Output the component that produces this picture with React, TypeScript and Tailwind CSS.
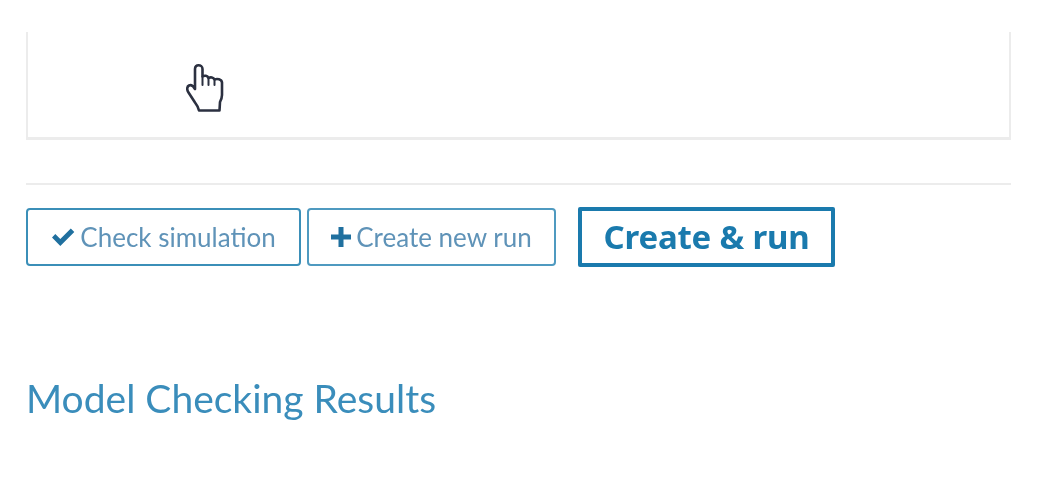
function HandCursor() {
  return (
    <svg
      viewBox="0 0 38 48"
      className="absolute left-[158px] top-[32px] h-[48px] w-[38px]"
      fill="#fff"
      stroke="#2b3040"
      strokeWidth="2.6"
      strokeLinejoin="round"
      strokeLinecap="round"
    >
      <path d="M9 25V5C9 2.500 10.500 1.300 12.500 1.300S16.500 2.500 16.500 5v7.500c2-1.300 5-1 6 1.500 2-1.200 5-.8 6 1.500 2.500-1 7-.5 7.500 3V31c0 3-1 5-2 7l-.5 8.500H13c-.8-3-2-5.500-4-8L2.500 28.500C.5 25.500 1 22.500 3 21.500c2-1 4 0 6 3.500Z" />
      <path d="M16.500 12.500V21M22.500 14V21M28.500 15.500V21" fill="none" strokeWidth="2" />
    </svg>
  );
}

export default function App() {
  return (
    <div className="min-h-[490px] w-[1040px] bg-white pt-[32px] pl-[26px] font-['Lato',sans-serif] blur-[0.4px]">
      <div className="relative h-[108px] w-[985px] border-x-[2px] border-b-[3px] border-[#ececec]">
        <HandCursor />
      </div>
      <div className="mt-[43px] h-[2px] w-[985px] bg-[#ececec]" />
      <div className="mt-[22px] flex items-center">
        <button className="flex h-[58px] w-[275px] items-center justify-center gap-[5px] rounded-[4px] border-2 border-[#3b8fb8] text-[26px] text-[#5f93b8]">
          <svg viewBox="0 0 24 20" className="h-[20px] w-[24px]" fill="#20709f">
            <path d="M1 10.500 4.300 7l5 5L19.800 1.500 23.300 5 9.300 19Z" />
          </svg>
          Check simulation
        </button>
        <button className="ml-[6px] flex h-[58px] w-[249px] items-center justify-center gap-[5px] rounded-[4px] border-2 border-[#4f9ac0] text-[26px] text-[#5f93b8]">
          <svg viewBox="0 0 20 20" className="h-[20px] w-[20px]" fill="#20709f">
            <path d="M7.500 0h5v7.500H20v5h-7.500V20h-5v-7.500H0v-5h7.500Z" />
          </svg>
          Create new run
        </button>
        <button className="ml-[22px] flex h-[60px] w-[257px] items-center justify-center rounded-[2px] border-4 border-[#1a7aad] font-['Noto_Sans',sans-serif] text-[33px] font-bold tracking-[-0.2px] text-[#1a7aad]">
          Create &amp; run
        </button>
      </div>
      <h2 className="mt-[106px] text-[39px] leading-[50px] text-[#3a8dbb]">Model Checking Results</h2>
    </div>
  );
}
